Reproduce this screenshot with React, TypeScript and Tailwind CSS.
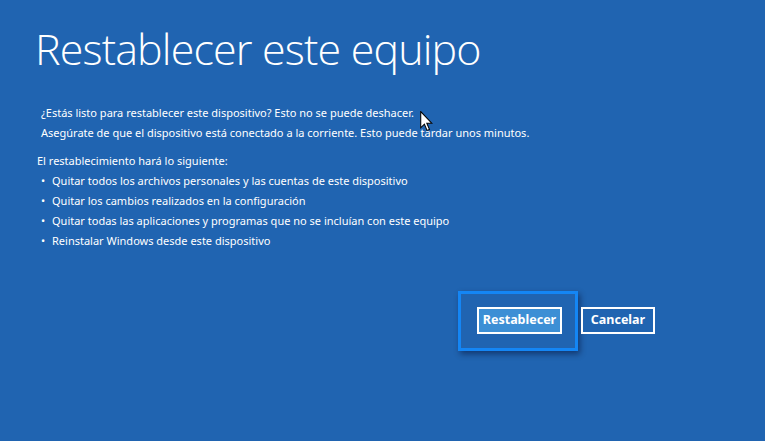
import React from "react";

export default function App() {
  const items = [
    "Quitar todos los archivos personales y las cuentas de este dispositivo",
    "Quitar los cambios realizados en la configuración",
    "Quitar todas las aplicaciones y programas que no se incluían con este equipo",
    "Reinstalar Windows desde este dispositivo",
  ];
  return (
    <div
      className="relative w-[765px] h-[441px] overflow-hidden bg-[#2064b1] text-white"
      style={{ fontFamily: '"Noto Sans", "Open Sans", sans-serif' }}
    >
      <h1
        className="absolute left-[35px] top-[23px] text-[43px] font-light leading-[52px] tracking-[-0.85px] whitespace-nowrap"
        style={{ fontFamily: '"Open Sans", sans-serif' }}
      >
        Restablecer este equipo
      </h1>
      <div className="pt-[103px] pl-[37px] text-[11px] leading-[20px]">
        <div className="pl-[4px]">
          <p>¿Estás listo para restablecer este dispositivo? Esto no se puede deshacer.</p>
          <p>Asegúrate de que el dispositivo está conectado a la corriente. Esto puede tardar unos minutos.</p>
        </div>
        <p className="mt-[8px] leading-[20px]">El restablecimiento hará lo siguiente:</p>
        <ul className="leading-[20px]">
          {items.map((t) => (
            <li key={t} className="flex pl-[4px]">
              <span className="w-[11px]">•</span>
              <span>{t}</span>
            </li>
          ))}
        </ul>
      </div>
      <div className="absolute left-[458px] top-[291px] flex items-start">
        <div className="w-[120px] h-[60px] border-[3px] border-[#1486f5] shadow-[2px_3px_6px_rgba(0,0,30,0.45)] flex items-center justify-center">
          <button className="ml-[3px] w-[85px] h-[27px] border-2 border-white bg-[#3c8fd5] text-[12.5px] font-bold text-white mt-[-2px]">
            Restablecer
          </button>
        </div>
        <button className="ml-[3px] mt-[16px] w-[74px] h-[27px] border-2 border-white bg-[#2064b1] text-[12.5px] font-bold text-white">
          Cancelar
        </button>
      </div>
      <svg className="absolute left-[420px] top-[111px]" width="13" height="21" viewBox="0 0 12 20">
        <path d="M0.5 0.5 L0.5 16 L4 12.5 L6.5 18.5 L8.8 17.5 L6.3 11.6 L11 11.6 Z" fill="white" stroke="black" strokeWidth="1" />
      </svg>
    </div>
  );
}
